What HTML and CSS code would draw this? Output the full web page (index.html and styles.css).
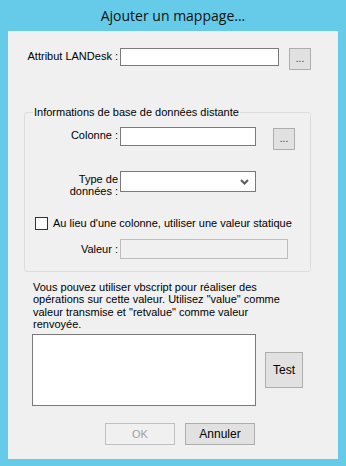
FILE: index.html
```html
<!DOCTYPE html>
<html lang="fr">
<head>
    <meta charset="UTF-8">
    <title>Ajouter un mappage...</title>
    <link rel="stylesheet" href="styles.css">
</head>
<body>
    <div class="window">
        <div class="titlebar">Ajouter un mappage...</div>

        <div class="client">
            <div class="row top-row">
                <label class="lbl">Attribut LANDesk :</label>
                <input type="text" class="field field-attr">
                <button class="btn btn-dots">...</button>
            </div>

            <fieldset class="group">
                <legend>Informations de base de données distante</legend>

                <div class="row col-row">
                    <label class="lbl">Colonne :</label>
                    <input type="text" class="field field-col">
                    <button class="btn btn-dots">...</button>
                </div>

                <div class="row type-row">
                    <label class="lbl">Type de<br>données :</label>
                    <div class="combo">
                        <svg width="9" height="6" viewBox="0 0 9 6">
                            <path d="M1 1 L4.5 4.5 L8 1" fill="none" stroke="#5a5a5a" stroke-width="2"/>
                        </svg>
                    </div>
                </div>

                <div class="check-row">
                    <span class="checkbox"></span>
                    <span>Au lieu d'une colonne, utiliser une valeur statique</span>
                </div>

                <div class="row val-row">
                    <label class="lbl">Valeur :</label>
                    <input type="text" class="field field-val" disabled>
                </div>
            </fieldset>

            <p class="note">Vous pouvez utiliser vbscript pour réaliser des<br>opérations sur cette valeur. Utilisez "value" comme<br>valeur transmise et "retvalue" comme valeur<br>renvoyée.</p>

            <div class="script-row">
                <textarea class="script"></textarea>
                <button class="btn btn-test">Test</button>
            </div>

            <div class="actions">
                <button class="btn btn-ok" disabled>OK</button>
                <button class="btn btn-cancel">Annuler</button>
            </div>
        </div>
    </div>
</body>
</html>
```

FILE: styles.css
```css
* {
    margin: 0;
    padding: 0;
    box-sizing: border-box;
}

body {
    background-color: #65cbe9;
    font-family: "Liberation Sans", Arial, sans-serif;
    font-size: 11px;
    color: #000;
}

.window {
    width: 346px;
    height: 466px;
    padding: 0 8px 7px 8px;
}

.titlebar {
    height: 31px;
    text-align: center;
    font-family: "Open Sans", "Noto Sans", sans-serif;
    font-size: 14px;
    line-height: 31px;
    color: #111;
}

.client {
    height: 428px;
    background-color: #f0f0f0;
    padding-top: 17px;
}

.row {
    display: flex;
    align-items: flex-start;
}

.lbl {
    text-align: right;
    line-height: 13px;
    padding-top: 2px;
    padding-right: 2px;
    white-space: nowrap;
}

.top-row .lbl {
    width: 112px;
}

.field {
    height: 18px;
    border: 1px solid #7a7a7a;
    background: #fff;
    font: inherit;
}

.field-attr {
    width: 159px;
}

.btn {
    font: inherit;
    background-color: #e1e1e1;
    border: 1px solid #adadad;
    color: #000;
}

.btn-dots {
    width: 22px;
    height: 22px;
    font-size: 10px;
    line-height: 20px;
    color: #333;
}

.top-row .btn-dots {
    margin-left: 10px;
}

.group {
    margin: 36px 0 0 16px;
    width: 287px;
    height: 166px;
    border: 1px solid #dcdcdc;
    border-radius: 3px;
    padding: 0;
}

.group legend {
    margin-left: 8px;
    padding: 0 1px;
    line-height: 13px;
}

.group .lbl {
    width: 95px;
}

.col-row {
    margin-top: 8px;
}

.field-col {
    width: 136px;
    height: 19px;
}

.col-row .btn-dots {
    margin-left: 17px;
    margin-top: 1px;
}

.type-row {
    margin-top: 21px;
}

.type-row .lbl {
    line-height: 12px;
    padding-top: 2px;
}

.combo {
    width: 136px;
    height: 21px;
    border: 1px solid #7a7a7a;
    background: #fff;
    display: flex;
    justify-content: flex-end;
    align-items: center;
    padding-right: 6px;
}

.check-row {
    display: flex;
    align-items: center;
    gap: 5px;
    margin: 20px 0 0 10px;
    line-height: 13px;
}

.checkbox {
    width: 13px;
    height: 13px;
    border: 1px solid #333;
    background: #fff;
}

.val-row {
    margin-top: 9px;
}

.val-row .lbl {
    padding-top: 4px;
}

.field-val {
    width: 168px;
    height: 20px;
    border-color: #bcbcbc;
    background: #f0f0f0;
}

.note {
    margin: 9px 0 0 25px;
    line-height: 12.3px;
}

.script-row {
    display: flex;
    align-items: center;
    margin: 4px 0 0 24px;
}

.script {
    width: 224px;
    height: 72px;
    border: 1px solid #7a7a7a;
    resize: none;
}

.btn-test {
    width: 38px;
    height: 36px;
    margin-left: 9px;
    font-size: 12px;
}

.actions {
    display: flex;
    gap: 10px;
    margin: 17px 0 0 97px;
}

.actions .btn {
    width: 70px;
    height: 22px;
}

.btn-ok:disabled {
    color: #a0a0a0;
    background-color: #f0f0f0;
    border-color: #bfbfbf;
}

.btn-cancel {
    font-size: 12px;
}
```
